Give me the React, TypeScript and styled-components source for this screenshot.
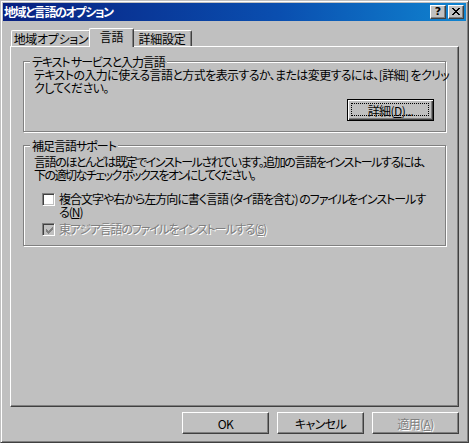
import React from "react";
import styled, { createGlobalStyle, css } from "styled-components";

const Global = createGlobalStyle`
  html, body { margin: 0; padding: 0; background: #c0c0c0; }
  body {
    font-family: "Noto Sans CJK JP", "Noto Sans", "Liberation Sans", sans-serif;
    font-size: 12px;
    color: #000;
    -webkit-font-smoothing: none;
  }
  * { box-sizing: border-box; }
`;

const Window = styled.div`
  width: 469px;
  height: 443px;
  background: #c0c0c0;
  border: 1px solid;
  border-color: #c0c0c0 #404040 #404040 #c0c0c0;
  box-shadow: inset 1px 1px 0 #fff, inset -1px -1px 0 #808080;
  padding: 2px;
  display: flex;
  flex-direction: column;
  font-feature-settings: "palt";
`;

const TitleBar = styled.div`
  height: 18px;
  flex: none;
  display: flex;
  align-items: center;
  padding: 0 2px 0 1px;
  background: linear-gradient(90deg, #082080 0%, #0a4fb0 60%, #1084d0 100%);
`;

const TitleText = styled.div`
  flex: 1;
  color: #fff;
  font-weight: bold;
  font-size: 12px;
  line-height: 18px;
  letter-spacing: -1.4px;
  white-space: nowrap;
`;

const CaptionButtons = styled.div`
  display: flex;
  gap: 2px;
`;

const CaptionButton = styled.div`
  width: 16px;
  height: 14px;
  background: #c0c0c0;
  border: 1px solid;
  border-color: #fff #404040 #404040 #fff;
  box-shadow: inset -1px -1px 0 #808080;
  display: flex;
  align-items: center;
  justify-content: center;
  font-family: "DejaVu Sans", sans-serif;
  font-weight: bold;
  font-size: 11px;
  line-height: 12px;
  padding-bottom: 1px;
`;

const Body = styled.div`
  flex: 1;
  display: flex;
  flex-direction: column;
  padding: 7px 7px 0;
`;

const TabRow = styled.div`
  height: 18px;
  display: flex;
  align-items: flex-end;
  padding-left: 1px;
`;

const Tab = styled.div<{ $w: number; $active?: boolean }>`
  width: ${(p) => p.$w}px;
  height: 16px;
  background: #c0c0c0;
  border-top: 1px solid #fff;
  border-left: 1px solid #fff;
  border-right: 1px solid #404040;
  border-radius: 2px 2px 0 0;
  box-shadow: inset -1px 0 0 #808080;
  text-align: center;
  line-height: 13px;
  padding-top: 1px;
  letter-spacing: -0.3px;
  white-space: nowrap;
  ${(p) =>
    p.$active &&
    css`
      position: relative;
      z-index: 1;
      height: 19px;
      margin: 0 -2px -1px;
    `}
`;

const Panel = styled.div`
  height: 361px;
  flex: none;
  border: 1px solid;
  border-color: #fff #404040 #404040 #fff;
  box-shadow: inset -1px -1px 0 #808080;
  padding: 14px 12px 0;
`;

const GroupBox = styled.div<{ $pad: string; $mt?: number }>`
  position: relative;
  border: 1px solid #808080;
  box-shadow: inset 1px 1px 0 #fff, 1px 1px 0 #fff;
  padding: ${(p) => p.$pad};
  margin-top: ${(p) => p.$mt ?? 0}px;
`;

const GroupTitle = styled.div<{ $ls: number }>`
  position: absolute;
  top: -7px;
  left: 6px;
  padding: 0 2px;
  background: #c0c0c0;
  line-height: 13px;
  letter-spacing: ${(p) => p.$ls}px;
  white-space: nowrap;
`;

const Line = styled.div<{ $ls: number; $disabled?: boolean }>`
  line-height: 13px;
  letter-spacing: ${(p) => p.$ls}px;
  white-space: nowrap;
  ${(p) =>
    p.$disabled &&
    css`
      color: #808080;
      text-shadow: 1px 1px 0 #fff;
    `}
`;

const RightRow = styled.div<{ $mt: number }>`
  display: flex;
  justify-content: flex-end;
  margin-top: ${(p) => p.$mt}px;
`;

const Button = styled.div<{ $default?: boolean; $disabled?: boolean }>`
  position: relative;
  width: 87px;
  height: 22px;
  background: #c0c0c0;
  border: 1px solid;
  border-color: #fff #404040 #404040 #fff;
  box-shadow: inset -1px -1px 0 #808080;
  display: flex;
  align-items: center;
  justify-content: center;
  line-height: 13px;
  letter-spacing: -0.6px;
  white-space: nowrap;
  ${(p) =>
    p.$default &&
    css`
      border-color: #000;
      box-shadow: inset 1px 1px 0 #fff, inset -1px -1px 0 #404040,
        inset -2px -2px 0 #808080;
    `}
  ${(p) =>
    p.$disabled &&
    css`
      color: #808080;
      text-shadow: 1px 1px 0 #fff;
    `}
`;

const FocusRing = styled.div`
  position: absolute;
  inset: 3px 4px 4px 3px;
  border: 1px dotted #000;
  pointer-events: none;
`;

const CheckRow = styled.div<{ $mt: number; $left: number }>`
  display: flex;
  align-items: flex-start;
  gap: 4px;
  margin-top: ${(p) => p.$mt}px;
  padding-left: ${(p) => p.$left}px;
`;

const CheckBox = styled.div<{ $disabled?: boolean }>`
  flex: none;
  width: 13px;
  height: 13px;
  margin-top: 1px;
  border: 1px solid;
  border-color: #808080 #fff #fff #808080;
  box-shadow: inset 1px 1px 0 #404040, inset -1px -1px 0 #c0c0c0;
  background: ${(p) => (p.$disabled ? "#c0c0c0" : "#fff")};
  position: relative;
`;

const CheckMark = styled.svg`
  position: absolute;
  left: 2px;
  top: 2px;
  display: block;
`;

const ButtonRow = styled.div`
  display: flex;
  justify-content: flex-end;
  gap: 8px;
  margin-top: 5px;
`;

const U = styled.span`
  text-decoration: underline;
`;

const checkCols: [number, number][] = [
  [0, 2],
  [1, 3],
  [2, 4],
  [3, 3],
  [4, 2],
  [5, 1],
  [6, 0],
];

const Check = ({ color }: { color: string }) => (
  <CheckMark width="9" height="9" viewBox="0 0 9 9" shapeRendering="crispEdges">
    {checkCols.map(([x, y]) => (
      <rect key={x} x={x + 1} y={y + 1} width="1" height="3" fill={color} />
    ))}
  </CheckMark>
);

const closeRows: [number, number, number][] = [
  [0, 0, 2], [0, 6, 2],
  [1, 1, 2], [1, 5, 2],
  [2, 2, 4],
  [3, 3, 2],
  [4, 2, 4],
  [5, 1, 2], [5, 5, 2],
  [6, 0, 2], [6, 6, 2],
];

const CloseGlyph = () => (
  <svg width="8" height="7" viewBox="0 0 8 7" shapeRendering="crispEdges" style={{ display: "block" }}>
    {closeRows.map(([y, x, w], i) => (
      <rect key={i} x={x} y={y} width={w} height="1" fill="#000" />
    ))}
  </svg>
);

export default function App() {
  return (
    <>
      <Global />
      <Window>
        <TitleBar>
          <TitleText>地域と言語のオプション</TitleText>
          <CaptionButtons>
            <CaptionButton>?</CaptionButton>
            <CaptionButton>
              <CloseGlyph />
            </CaptionButton>
          </CaptionButtons>
        </TitleBar>
        <Body>
          <TabRow>
            <Tab $w={80}>地域オプション</Tab>
            <Tab $w={45} $active>
              言語
            </Tab>
            <Tab $w={60}>詳細設定</Tab>
          </TabRow>
          <Panel>
            <GroupBox $pad="6px 11px 10px 10px">
              <GroupTitle $ls={-1.1}>テキスト サービスと入力言語</GroupTitle>
              <Line $ls={-0.6}>
                テキストの入力に使える言語と方式を表示するか、または変更するには、[詳細] をクリッ
              </Line>
              <Line $ls={-0.6}>クしてください。</Line>
              <RightRow $mt={5}>
                <Button $default>
                  詳細(<U>D</U>)...
                  <FocusRing />
                </Button>
              </RightRow>
            </GroupBox>
            <GroupBox $pad="9px 11px 9px 10px" $mt={13}>
              <GroupTitle $ls={-1}>補足言語サポート</GroupTitle>
              <Line $ls={-1.4}>
                言語のほとんどは既定でインストールされています。追加の言語をインストールするには、
              </Line>
              <Line $ls={-1.5}>下の適切なチェック ボックスをオンにしてください。</Line>
              <CheckRow $mt={11} $left={8}>
                <CheckBox />
                <div>
                  <Line $ls={-1}>
                    複合文字や右から左方向に書く言語 (タイ語を含む) のファイルをインストールす
                  </Line>
                  <Line $ls={-1}>
                    る(<U>N</U>)
                  </Line>
                </div>
              </CheckRow>
              <CheckRow $mt={4} $left={8}>
                <CheckBox $disabled>
                  <Check color="#808080" />
                </CheckBox>
                <Line $ls={-1.2} $disabled>
                  東アジア言語のファイルをインストールする(<U>S</U>)
                </Line>
              </CheckRow>
            </GroupBox>
          </Panel>
          <ButtonRow>
            <Button>OK</Button>
            <Button>キャンセル</Button>
            <Button $disabled>
              適用(<U>A</U>)
            </Button>
          </ButtonRow>
        </Body>
      </Window>
    </>
  );
}
